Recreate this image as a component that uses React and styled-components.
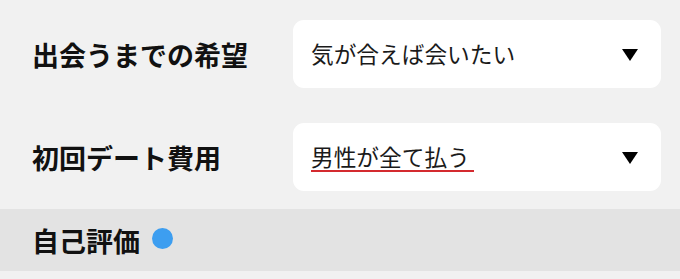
import React from "react";
import styled, { createGlobalStyle } from "styled-components";

const GlobalStyle = createGlobalStyle`
    html, body {
        margin: 0;
        padding: 0;
        background: #f1f1f1;
    }
    body {
        font-family: "Noto Sans CJK JP", "Noto Sans", sans-serif;
        color: #111;
    }
`;

const Page = styled.div`
    width: 680px;
    height: 279px;
    overflow: hidden;
    background: #f1f1f1;
    padding-top: 20px;
    box-sizing: border-box;
`;

const Row = styled.div`
    display: flex;
    align-items: center;
    height: 68px;
    padding: 0 19px 0 32px;
    margin-bottom: ${(p) => p.gap || 0}px;
`;

const Label = styled.div`
    width: 261px;
    font-size: 27px;
    font-weight: bold;
    line-height: 1;
    color: #111;
`;

const Select = styled.div`
    flex: 1;
    height: 68px;
    background: #fff;
    border-radius: 11px;
    display: flex;
    align-items: center;
    justify-content: space-between;
    padding: 0 23px 0 18px;
    box-sizing: border-box;
`;

const Value = styled.span`
    font-size: 22.7px;
    line-height: 1;
    color: #1a1a1a;
    padding: ${(p) => (p.composing ? "0 4px 2px 0" : "0")};
    border-bottom: ${(p) => (p.composing ? "2px solid #d42a2f" : "none")};
    margin-top: ${(p) => (p.composing ? "4px" : "0")};
`;

const Arrow = styled.span`
    width: 0;
    height: 0;
    border-left: 8.5px solid transparent;
    border-right: 8.5px solid transparent;
    border-top: 12px solid #000;
    margin-top: 2px;
`;

const Section = styled.div`
    display: flex;
    align-items: center;
    gap: 12px;
    height: 62px;
    background: #e3e3e3;
    padding: 0 32px;
    margin-top: 18px;
    font-size: 27px;
    font-weight: bold;
`;

const Dot = styled.span`
    width: 21px;
    height: 21px;
    border-radius: 50%;
    background: #3d9ef0;
    margin-top: -4px;
`;

const App = () => {
    return (
        <>
            <GlobalStyle />
            <Page>
                <Row gap={35}>
                    <Label>出会うまでの希望</Label>
                    <Select>
                        <Value>気が合えば会いたい</Value>
                        <Arrow />
                    </Select>
                </Row>
                <Row>
                    <Label>初回デート費用</Label>
                    <Select>
                        <Value composing>男性が全て払う</Value>
                        <Arrow />
                    </Select>
                </Row>
                <Section>
                    自己評価
                    <Dot />
                </Section>
            </Page>
        </>
    );
};

export default App;
